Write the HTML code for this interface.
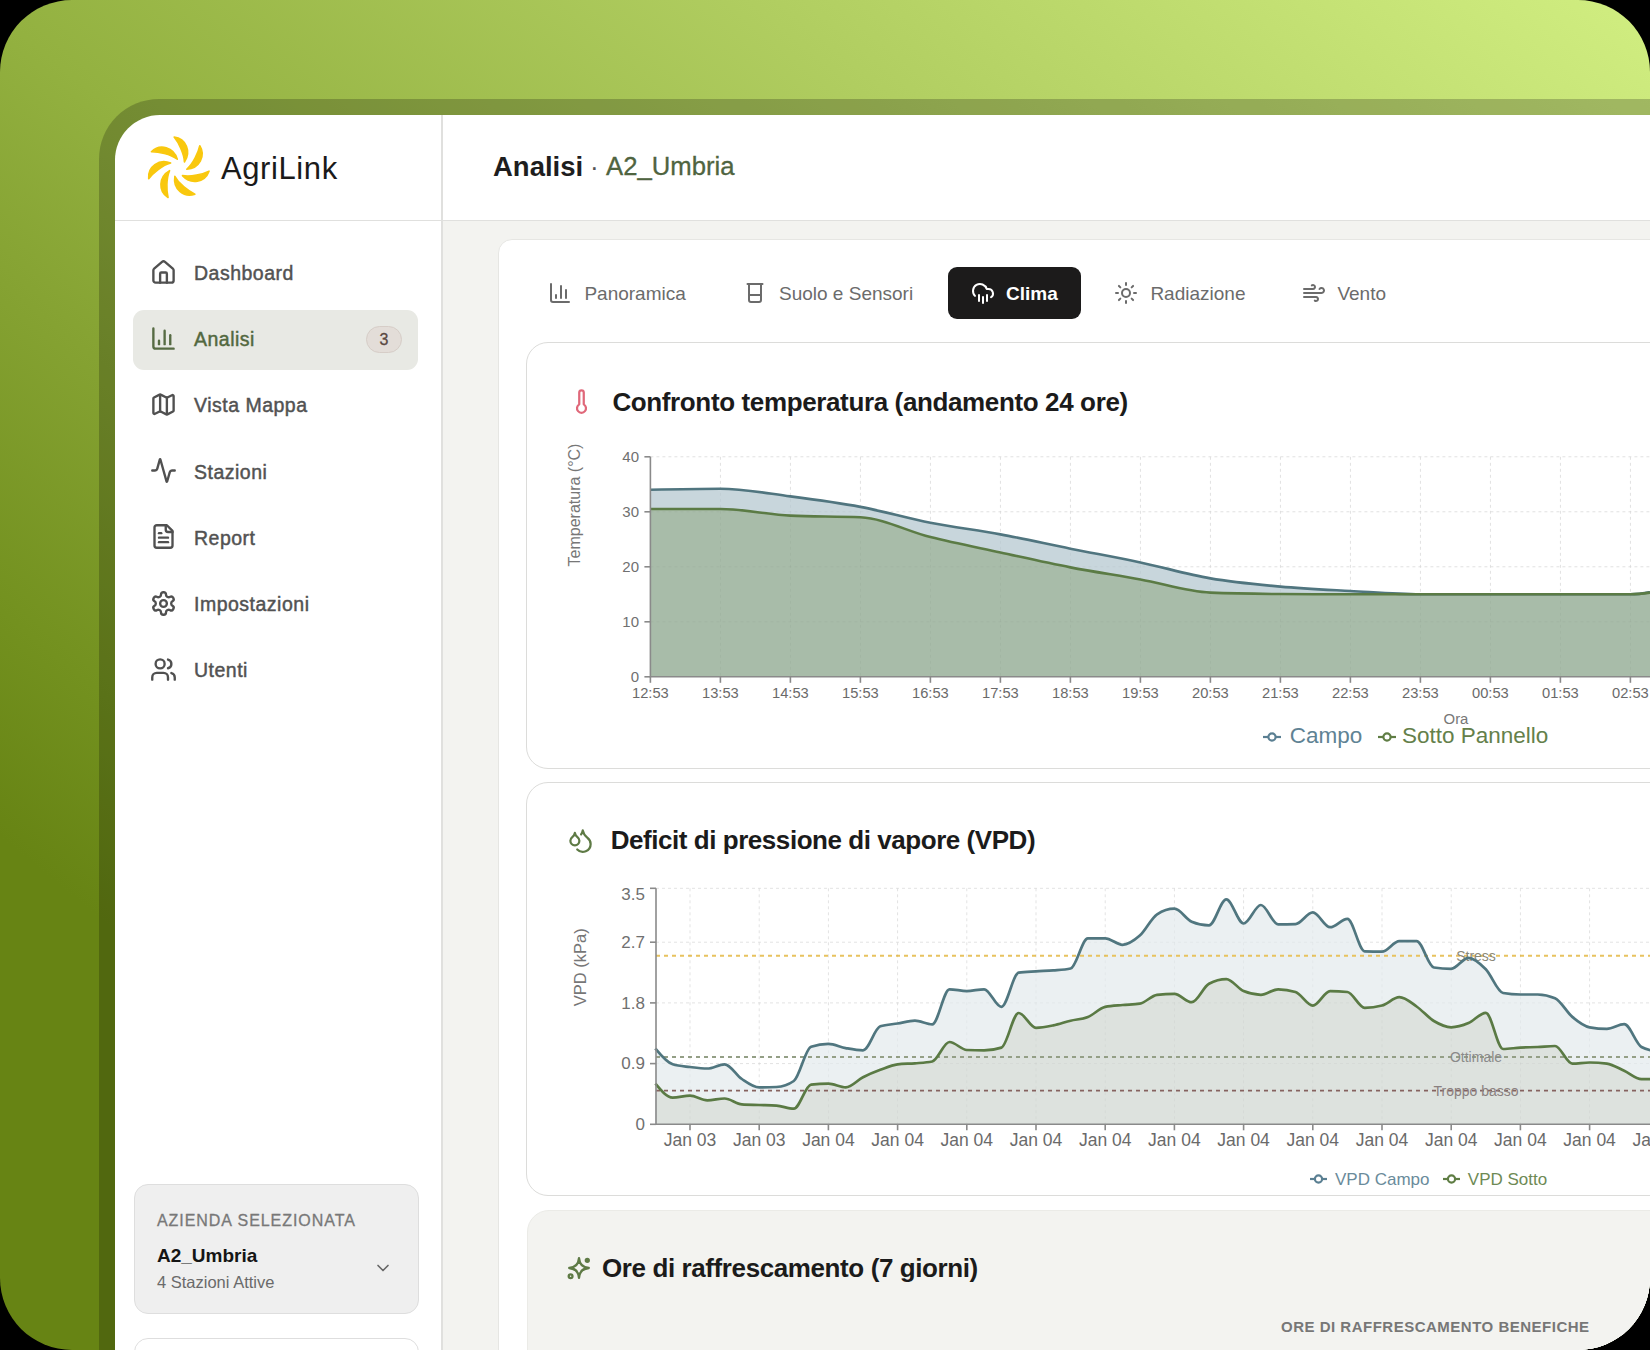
<!DOCTYPE html><html><head><meta charset="utf-8"><style>html,body{margin:0;padding:0;width:1650px;height:1350px;overflow:hidden;background:#000;}.t{position:absolute;white-space:nowrap;font-family:"Liberation Sans", sans-serif;}svg{overflow:visible}</style></head><body><div style="position:absolute;left:0;top:0;width:1650px;height:1350px;border-radius:72px;overflow:hidden;background:linear-gradient(to top right,#678414 0%,#678414 19%,#73911f 27.4%,#85a232 39.6%,#93b140 49.4%,#b0cd60 72.7%,#cbe87b 95%,#d1ee81 100%);"><div style="position:absolute;left:99px;top:99px;width:1700px;height:1400px;border-radius:60px;background:rgba(0,0,0,0.21)"></div><div style="position:absolute;left:115px;top:115px;width:1600px;height:1300px;border-top-left-radius:45px;overflow:hidden;background:#fff"><div style="position:absolute;left:-115px;top:-115px;width:1650px;height:1350px"><div style="position:absolute;left:442px;top:221px;width:1300px;height:1200px;background:#f3f3f0"></div><div style="position:absolute;left:441px;top:115px;width:1.5px;height:1300px;background:#e0e0de"></div><div style="position:absolute;left:115px;top:219.5px;width:1600px;height:1.5px;background:#e0e0de"></div><svg style="position:absolute;left:138px;top:128px" width="80" height="80" viewBox="-40 -40 80 80"><g fill="#f9c80e" stroke="#f9c80e" stroke-width="1.6" stroke-linejoin="round"><path transform="rotate(4.00 0 0)" d="M-6.00,-30.60 C6.04,-29.98 12.40,-17.21 6.00,-6.50 C5.09,-15.07 -1.21,-25.47 -6.00,-30.60Z"/><path transform="rotate(55.43 0 0)" d="M-6.00,-30.60 C6.04,-29.98 12.40,-17.21 6.00,-6.50 C5.09,-15.07 -1.21,-25.47 -6.00,-30.60Z"/><path transform="rotate(106.86 0 0)" d="M-6.00,-30.60 C6.04,-29.98 12.40,-17.21 6.00,-6.50 C5.09,-15.07 -1.21,-25.47 -6.00,-30.60Z"/><path transform="rotate(158.29 0 0)" d="M-6.00,-30.60 C6.04,-29.98 12.40,-17.21 6.00,-6.50 C5.09,-15.07 -1.21,-25.47 -6.00,-30.60Z"/><path transform="rotate(209.71 0 0)" d="M-6.00,-30.60 C6.04,-29.98 12.40,-17.21 6.00,-6.50 C5.09,-15.07 -1.21,-25.47 -6.00,-30.60Z"/><path transform="rotate(261.14 0 0)" d="M-6.00,-30.60 C6.04,-29.98 12.40,-17.21 6.00,-6.50 C5.09,-15.07 -1.21,-25.47 -6.00,-30.60Z"/><path transform="rotate(312.57 0 0)" d="M-6.00,-30.60 C6.04,-29.98 12.40,-17.21 6.00,-6.50 C5.09,-15.07 -1.21,-25.47 -6.00,-30.60Z"/></g></svg><div class="t" style="left:221.0px;top:152.9px;font-size:31px;line-height:31px;color:#1a1a1a;font-weight:400;letter-spacing:0.6px;">AgriLink</div><div class="t" style="left:493.0px;top:152.7px;font-size:27.5px;line-height:27.5px;color:#1e1e1e;font-weight:700;letter-spacing:0px;">Analisi</div><div class="t" style="left:590.0px;top:154.0px;font-size:26px;line-height:26px;color:#555;font-weight:400;letter-spacing:0px;">·</div><div class="t" style="left:606.0px;top:154.2px;font-size:25.7px;line-height:25.7px;color:#4f6440;font-weight:400;letter-spacing:0px;-webkit-text-stroke:0.3px currentColor;">A2_Umbria</div><div style="position:absolute;left:133px;top:310px;width:285px;height:60px;border-radius:11px;background:#e8e9e4"></div><div style="position:absolute;left:366px;top:326px;width:36px;height:27px;border-radius:14px;background:#e3ddd8;border:1px solid #d6cdc7;box-sizing:border-box"></div><div class="t" style="left:-616.0px;width:2000px;text-align:center;top:331.9px;font-size:16px;line-height:16px;color:#5a4842;font-weight:400;letter-spacing:0px;-webkit-text-stroke:0.3px currentColor;">3</div><svg style="position:absolute;left:150.0px;top:259.0px;" width="27" height="27" viewBox="0 0 24 24" fill="none" stroke="#505050" stroke-width="2.1" stroke-linecap="round" stroke-linejoin="round"><path d="M15 21v-8a1 1 0 0 0-1-1h-4a1 1 0 0 0-1 1v8"/><path d="M3 10a2 2 0 0 1 .709-1.528l7-5.999a2 2 0 0 1 2.582 0l7 5.999A2 2 0 0 1 21 10v9a2 2 0 0 1-2 2H5a2 2 0 0 1-2-2z"/></svg><div class="t" style="left:194.0px;top:264.2px;font-size:19.5px;line-height:19.5px;color:#525252;font-weight:400;letter-spacing:0.5px;-webkit-text-stroke:0.45px currentColor;">Dashboard</div><svg style="position:absolute;left:150.0px;top:325.1px;" width="27" height="27" viewBox="0 0 24 24" fill="none" stroke="#566b43" stroke-width="2.1" stroke-linecap="round" stroke-linejoin="round"><path d="M3 3v16a2 2 0 0 0 2 2h16"/><path d="M18 17V9"/><path d="M13 17V5"/><path d="M8 17v-3"/></svg><div class="t" style="left:194.0px;top:330.3px;font-size:19.5px;line-height:19.5px;color:#52683f;font-weight:400;letter-spacing:0.5px;-webkit-text-stroke:0.45px currentColor;">Analisi</div><svg style="position:absolute;left:150.0px;top:391.2px;" width="27" height="27" viewBox="0 0 24 24" fill="none" stroke="#505050" stroke-width="2.1" stroke-linecap="round" stroke-linejoin="round"><path d="M14.106 5.553a2 2 0 0 0 1.788 0l3.659-1.83A1 1 0 0 1 21 4.619v12.764a1 1 0 0 1-.553.894l-4.553 2.277a2 2 0 0 1-1.788 0l-4.212-2.106a2 2 0 0 0-1.788 0l-3.659 1.83A1 1 0 0 1 3 19.381V6.618a1 1 0 0 1 .553-.894l4.553-2.277a2 2 0 0 1 1.788 0z"/><path d="M15 5.764v15"/><path d="M9 3.236v15"/></svg><div class="t" style="left:194.0px;top:396.4px;font-size:19.5px;line-height:19.5px;color:#525252;font-weight:400;letter-spacing:0.5px;-webkit-text-stroke:0.45px currentColor;">Vista Mappa</div><svg style="position:absolute;left:150.0px;top:457.3px;" width="27" height="27" viewBox="0 0 24 24" fill="none" stroke="#505050" stroke-width="2.1" stroke-linecap="round" stroke-linejoin="round"><path d="M22 12h-2.48a2 2 0 0 0-1.93 1.46l-2.35 8.36a.25.25 0 0 1-.48 0L9.24 2.18a.25.25 0 0 0-.48 0l-2.35 8.36A2 2 0 0 1 4.49 12H2"/></svg><div class="t" style="left:194.0px;top:462.5px;font-size:19.5px;line-height:19.5px;color:#525252;font-weight:400;letter-spacing:0.5px;-webkit-text-stroke:0.45px currentColor;">Stazioni</div><svg style="position:absolute;left:150.0px;top:523.4px;" width="27" height="27" viewBox="0 0 24 24" fill="none" stroke="#505050" stroke-width="2.1" stroke-linecap="round" stroke-linejoin="round"><path d="M15 2H6a2 2 0 0 0-2 2v16a2 2 0 0 0 2 2h12a2 2 0 0 0 2-2V7Z"/><path d="M14 2v4a2 2 0 0 0 2 2h4"/><path d="M10 9H8"/><path d="M16 13H8"/><path d="M16 17H8"/></svg><div class="t" style="left:194.0px;top:528.6px;font-size:19.5px;line-height:19.5px;color:#525252;font-weight:400;letter-spacing:0.5px;-webkit-text-stroke:0.45px currentColor;">Report</div><svg style="position:absolute;left:150.0px;top:589.5px;" width="27" height="27" viewBox="0 0 24 24" fill="none" stroke="#505050" stroke-width="2.1" stroke-linecap="round" stroke-linejoin="round"><path d="M12.22 2h-.44a2 2 0 0 0-2 2v.18a2 2 0 0 1-1 1.73l-.43.25a2 2 0 0 1-2 0l-.15-.08a2 2 0 0 0-2.73.73l-.22.38a2 2 0 0 0 .73 2.73l.15.1a2 2 0 0 1 1 1.72v.51a2 2 0 0 1-1 1.74l-.15.09a2 2 0 0 0-.73 2.73l.22.38a2 2 0 0 0 2.73.73l.15-.08a2 2 0 0 1 2 0l.43.25a2 2 0 0 1 1 1.73V20a2 2 0 0 0 2 2h.44a2 2 0 0 0 2-2v-.18a2 2 0 0 1 1-1.73l.43-.25a2 2 0 0 1 2 0l.15.08a2 2 0 0 0 2.73-.73l.22-.39a2 2 0 0 0-.73-2.73l-.15-.08a2 2 0 0 1-1-1.74v-.5a2 2 0 0 1 1-1.74l.15-.09a2 2 0 0 0 .73-2.73l-.22-.38a2 2 0 0 0-2.73-.73l-.15.08a2 2 0 0 1-2 0l-.43-.25a2 2 0 0 1-1-1.73V4a2 2 0 0 0-2-2z"/><circle cx="12" cy="12" r="3"/></svg><div class="t" style="left:194.0px;top:594.7px;font-size:19.5px;line-height:19.5px;color:#525252;font-weight:400;letter-spacing:0.5px;-webkit-text-stroke:0.45px currentColor;">Impostazioni</div><svg style="position:absolute;left:150.0px;top:655.6px;" width="27" height="27" viewBox="0 0 24 24" fill="none" stroke="#505050" stroke-width="2.1" stroke-linecap="round" stroke-linejoin="round"><path d="M16 21v-2a4 4 0 0 0-4-4H6a4 4 0 0 0-4 4v2"/><circle cx="9" cy="7" r="4"/><path d="M22 21v-2a4 4 0 0 0-3-3.87"/><path d="M16 3.13a4 4 0 0 1 0 7.75"/></svg><div class="t" style="left:194.0px;top:660.8px;font-size:19.5px;line-height:19.5px;color:#525252;font-weight:400;letter-spacing:0.5px;-webkit-text-stroke:0.45px currentColor;">Utenti</div><div style="position:absolute;left:133.5px;top:1184px;width:285px;height:130px;border-radius:14px;background:#efefef;border:1.5px solid #dedede;box-sizing:border-box"></div><div class="t" style="left:157.0px;top:1213.3px;font-size:16px;line-height:16px;color:#787878;font-weight:400;letter-spacing:0.95px;-webkit-text-stroke:0.3px currentColor;">AZIENDA SELEZIONATA</div><div class="t" style="left:157.0px;top:1246.2px;font-size:19px;line-height:19px;color:#151515;font-weight:700;letter-spacing:0px;">A2_Umbria</div><div class="t" style="left:157.0px;top:1273.7px;font-size:16.5px;line-height:16.5px;color:#6a6a6a;font-weight:400;letter-spacing:0px;">4 Stazioni Attive</div><svg style="position:absolute;left:373.0px;top:1257.5px;" width="20" height="20" viewBox="0 0 24 24" fill="none" stroke="#666" stroke-width="2" stroke-linecap="round" stroke-linejoin="round"><path d="m6 9 6 6 6-6"/></svg><div style="position:absolute;left:133.5px;top:1337.5px;width:285px;height:130px;border-radius:14px;background:#fff;border:1.5px solid #dedede;box-sizing:border-box"></div><div style="position:absolute;left:497.5px;top:238.5px;width:1300px;height:1300px;border-radius:14px;background:#fff;border:1px solid #e6e6e3;box-sizing:border-box"></div><div style="position:absolute;left:948px;top:267px;width:132.5px;height:51.5px;border-radius:9px;background:#1c1b1b"></div><svg style="position:absolute;left:548.3px;top:281.0px;" width="24" height="24" viewBox="0 0 24 24" fill="none" stroke="#6b6b6b" stroke-width="2" stroke-linecap="round" stroke-linejoin="round"><path d="M3 3v16a2 2 0 0 0 2 2h16"/><path d="M18 17V9"/><path d="M13 17V5"/><path d="M8 17v-3"/></svg><div class="t" style="left:584.4px;top:283.7px;font-size:19px;line-height:19px;color:#6b6b6b;font-weight:400;letter-spacing:0px;">Panoramica</div><svg style="position:absolute;left:743.3px;top:281.0px;" width="24" height="24" viewBox="0 0 24 24" fill="none" stroke="#6b6b6b" stroke-width="2" stroke-linecap="round" stroke-linejoin="round"><path d="M4.5 3h15"/><path d="M6 3v16a2 2 0 0 0 2 2h8a2 2 0 0 0 2-2V3"/><path d="M6 14h12"/></svg><div class="t" style="left:779.0px;top:283.7px;font-size:19px;line-height:19px;color:#6b6b6b;font-weight:400;letter-spacing:0px;">Suolo e Sensori</div><svg style="position:absolute;left:971.2px;top:281.0px;" width="24" height="24" viewBox="0 0 24 24" fill="none" stroke="#fff" stroke-width="2" stroke-linecap="round" stroke-linejoin="round"><path d="M4 14.899A7 7 0 1 1 15.71 8h1.79a4.5 4.5 0 0 1 2.5 8.242"/><path d="M16 14v6"/><path d="M8 14v6"/><path d="M12 16v6"/></svg><div class="t" style="left:1006.0px;top:283.7px;font-size:19px;line-height:19px;color:#fff;font-weight:700;letter-spacing:0px;">Clima</div><svg style="position:absolute;left:1114.0px;top:281.0px;" width="24" height="24" viewBox="0 0 24 24" fill="none" stroke="#6b6b6b" stroke-width="2" stroke-linecap="round" stroke-linejoin="round"><circle cx="12" cy="12" r="4"/><path d="M12 2v2"/><path d="M12 20v2"/><path d="m4.93 4.93 1.41 1.41"/><path d="m17.66 17.66 1.41 1.41"/><path d="M2 12h2"/><path d="M20 12h2"/><path d="m6.34 17.66-1.41 1.41"/><path d="m19.07 4.93-1.41 1.41"/></svg><div class="t" style="left:1150.4px;top:283.7px;font-size:19px;line-height:19px;color:#6b6b6b;font-weight:400;letter-spacing:0px;">Radiazione</div><svg style="position:absolute;left:1301.5px;top:281.0px;" width="24" height="24" viewBox="0 0 24 24" fill="none" stroke="#6b6b6b" stroke-width="2" stroke-linecap="round" stroke-linejoin="round"><path d="M12.8 19.6A2 2 0 1 0 14 16H2"/><path d="M17.5 8a2.5 2.5 0 1 1 2 4H2"/><path d="M9.8 4.4A2 2 0 1 1 11 8H2"/></svg><div class="t" style="left:1337.4px;top:283.7px;font-size:19px;line-height:19px;color:#6b6b6b;font-weight:400;letter-spacing:0px;">Vento</div><div style="position:absolute;left:526px;top:341.5px;width:1300px;height:427px;border-radius:22px;background:#fff;border:1.5px solid #dcdcda;box-sizing:border-box"></div><div style="position:absolute;left:526px;top:782px;width:1300px;height:414px;border-radius:22px;background:#fff;border:1.5px solid #dcdcda;box-sizing:border-box"></div><div style="position:absolute;left:526.5px;top:1210px;width:1300px;height:400px;border-radius:22px;background:#f3f3f0;border:1px solid #ebebe7;box-sizing:border-box"></div><svg style="position:absolute;left:568.0px;top:388.3px;" width="27" height="27" viewBox="0 0 24 24" fill="none" stroke="#e0687a" stroke-width="2" stroke-linecap="round" stroke-linejoin="round"><path d="M14 4v10.54a4 4 0 1 1-4 0V4a2 2 0 0 1 4 0Z"/></svg><div class="t" style="left:612.4px;top:388.6px;font-size:26px;line-height:26px;color:#1b1b1b;font-weight:700;letter-spacing:-0.37px;">Confronto temperatura (andamento 24 ore)</div><svg style="position:absolute;left:566.7px;top:826.7px;" width="27" height="27" viewBox="0 0 24 24" fill="none" stroke="#5e7a45" stroke-width="2" stroke-linecap="round" stroke-linejoin="round"><path d="M7 16.3c2.2 0 4-1.83 4-4.05 0-1.16-.57-2.26-1.71-3.19S7.29 6.75 7 5.3c-.29 1.45-1.14 2.84-2.29 3.76S3 11.1 3 12.25c0 2.22 1.8 4.05 4 4.05z"/><path d="M12.56 6.6A10.97 10.97 0 0 0 14 3.02c.5 2.5 2 4.9 4 6.5s3 3.5 3 5.5a6.98 6.98 0 0 1-11.91 4.97"/></svg><div class="t" style="left:610.7px;top:826.6px;font-size:26px;line-height:26px;color:#1b1b1b;font-weight:700;letter-spacing:-0.45px;">Deficit di pressione di vapore (VPD)</div><svg style="position:absolute;left:566.5px;top:1256.0px;color:#5e7a45;" width="24" height="24" viewBox="0 0 24 24" fill="none" stroke="#5e7a45" stroke-width="2.3" stroke-linecap="round" stroke-linejoin="round"><path d="M12 2.2 Q12.7 11.3 21.8 12 Q12.7 12.7 12 21.8 Q11.3 12.7 2.2 12 Q11.3 11.3 12 2.2Z"/><circle cx="3.6" cy="20.2" r="1.9"/><circle cx="20.3" cy="4.3" r="1.5" fill="currentColor"/></svg><div class="t" style="left:602.0px;top:1255.0px;font-size:26px;line-height:26px;color:#1b1b1b;font-weight:700;letter-spacing:-0.4px;">Ore di raffrescamento (7 giorni)</div><div class="t" style="left:1281.0px;top:1319.2px;font-size:15px;line-height:15px;color:#777;font-weight:700;letter-spacing:0.5px;">ORE DI RAFFRESCAMENTO BENEFICHE</div><svg style="position:absolute;left:0;top:0" width="1650" height="1350"><g stroke="#e9e9e9" stroke-width="1" stroke-dasharray="3 3"><line x1="650.4" y1="621.8" x2="1650" y2="621.8"/><line x1="650.4" y1="566.8" x2="1650" y2="566.8"/><line x1="650.4" y1="511.8" x2="1650" y2="511.8"/><line x1="650.4" y1="456.8" x2="1650" y2="456.8"/><line x1="720.4" y1="456.8" x2="720.4" y2="676.8"/><line x1="790.4" y1="456.8" x2="790.4" y2="676.8"/><line x1="860.4" y1="456.8" x2="860.4" y2="676.8"/><line x1="930.4" y1="456.8" x2="930.4" y2="676.8"/><line x1="1000.4" y1="456.8" x2="1000.4" y2="676.8"/><line x1="1070.4" y1="456.8" x2="1070.4" y2="676.8"/><line x1="1140.4" y1="456.8" x2="1140.4" y2="676.8"/><line x1="1210.4" y1="456.8" x2="1210.4" y2="676.8"/><line x1="1280.4" y1="456.8" x2="1280.4" y2="676.8"/><line x1="1350.4" y1="456.8" x2="1350.4" y2="676.8"/><line x1="1420.4" y1="456.8" x2="1420.4" y2="676.8"/><line x1="1490.4" y1="456.8" x2="1490.4" y2="676.8"/><line x1="1560.4" y1="456.8" x2="1560.4" y2="676.8"/><line x1="1630.4" y1="456.8" x2="1630.4" y2="676.8"/><line x1="1700.4" y1="456.8" x2="1700.4" y2="676.8"/></g><path d="M650.40,489.80C673.73,489.25 697.07,488.70 720.40,488.70C743.73,488.70 767.07,493.38 790.40,496.40C813.73,499.42 837.07,502.45 860.40,506.85C883.73,511.25 907.07,518.22 930.40,522.80C953.73,527.38 977.07,530.04 1000.40,534.35C1023.73,538.66 1047.07,543.97 1070.40,548.65C1093.73,553.32 1117.07,557.45 1140.40,562.40C1163.73,567.35 1187.07,574.32 1210.40,578.35C1233.73,582.38 1257.07,584.49 1280.40,586.60C1303.73,588.71 1327.07,589.72 1350.40,591.00C1373.73,592.28 1397.07,594.30 1420.40,594.30C1443.73,594.30 1467.07,594.30 1490.40,594.30C1513.73,594.30 1537.07,594.30 1560.40,594.30C1583.73,594.30 1607.07,594.30 1630.40,594.30C1653.73,594.30 1677.07,584.22 1700.40,580.55C1723.73,576.88 1747.07,574.59 1770.40,572.30L1770.40,676.80L650.40,676.80Z" fill="#c8d6dc"/><path d="M650.40,509.05C673.73,509.05 697.07,509.05 720.40,509.05C743.73,509.05 767.07,514.55 790.40,515.65C813.73,516.75 837.07,516.20 860.40,517.30C883.73,518.40 907.07,531.23 930.40,537.10C953.73,542.97 977.07,547.46 1000.40,552.50C1023.73,557.54 1047.07,562.86 1070.40,567.35C1093.73,571.84 1117.07,575.23 1140.40,579.45C1163.73,583.67 1187.07,591.73 1210.40,592.65C1233.73,593.57 1257.07,593.84 1280.40,594.02C1303.73,594.21 1327.07,594.30 1350.40,594.30C1373.73,594.30 1397.07,594.30 1420.40,594.30C1443.73,594.30 1467.07,594.30 1490.40,594.30C1513.73,594.30 1537.07,594.30 1560.40,594.30C1583.73,594.30 1607.07,594.30 1630.40,594.30C1653.73,594.30 1677.07,586.97 1700.40,583.30C1723.73,579.63 1747.07,575.97 1770.40,572.30L1770.40,676.80L650.40,676.80Z" fill="#a8bca9"/><g stroke="#000" stroke-opacity="0.035" stroke-width="1" stroke-dasharray="3 3"><line x1="650.4" y1="621.8" x2="1650" y2="621.8"/><line x1="650.4" y1="566.8" x2="1650" y2="566.8"/><line x1="650.4" y1="511.8" x2="1650" y2="511.8"/><line x1="650.4" y1="456.8" x2="1650" y2="456.8"/><line x1="720.4" y1="456.8" x2="720.4" y2="676.8"/><line x1="790.4" y1="456.8" x2="790.4" y2="676.8"/><line x1="860.4" y1="456.8" x2="860.4" y2="676.8"/><line x1="930.4" y1="456.8" x2="930.4" y2="676.8"/><line x1="1000.4" y1="456.8" x2="1000.4" y2="676.8"/><line x1="1070.4" y1="456.8" x2="1070.4" y2="676.8"/><line x1="1140.4" y1="456.8" x2="1140.4" y2="676.8"/><line x1="1210.4" y1="456.8" x2="1210.4" y2="676.8"/><line x1="1280.4" y1="456.8" x2="1280.4" y2="676.8"/><line x1="1350.4" y1="456.8" x2="1350.4" y2="676.8"/><line x1="1420.4" y1="456.8" x2="1420.4" y2="676.8"/><line x1="1490.4" y1="456.8" x2="1490.4" y2="676.8"/><line x1="1560.4" y1="456.8" x2="1560.4" y2="676.8"/><line x1="1630.4" y1="456.8" x2="1630.4" y2="676.8"/><line x1="1700.4" y1="456.8" x2="1700.4" y2="676.8"/></g><path d="M650.40,489.80C673.73,489.25 697.07,488.70 720.40,488.70C743.73,488.70 767.07,493.38 790.40,496.40C813.73,499.42 837.07,502.45 860.40,506.85C883.73,511.25 907.07,518.22 930.40,522.80C953.73,527.38 977.07,530.04 1000.40,534.35C1023.73,538.66 1047.07,543.97 1070.40,548.65C1093.73,553.32 1117.07,557.45 1140.40,562.40C1163.73,567.35 1187.07,574.32 1210.40,578.35C1233.73,582.38 1257.07,584.49 1280.40,586.60C1303.73,588.71 1327.07,589.72 1350.40,591.00C1373.73,592.28 1397.07,594.30 1420.40,594.30C1443.73,594.30 1467.07,594.30 1490.40,594.30C1513.73,594.30 1537.07,594.30 1560.40,594.30C1583.73,594.30 1607.07,594.30 1630.40,594.30C1653.73,594.30 1677.07,584.22 1700.40,580.55C1723.73,576.88 1747.07,574.59 1770.40,572.30" fill="none" stroke="#50757f" stroke-width="2.6"/><path d="M650.40,509.05C673.73,509.05 697.07,509.05 720.40,509.05C743.73,509.05 767.07,514.55 790.40,515.65C813.73,516.75 837.07,516.20 860.40,517.30C883.73,518.40 907.07,531.23 930.40,537.10C953.73,542.97 977.07,547.46 1000.40,552.50C1023.73,557.54 1047.07,562.86 1070.40,567.35C1093.73,571.84 1117.07,575.23 1140.40,579.45C1163.73,583.67 1187.07,591.73 1210.40,592.65C1233.73,593.57 1257.07,593.84 1280.40,594.02C1303.73,594.21 1327.07,594.30 1350.40,594.30C1373.73,594.30 1397.07,594.30 1420.40,594.30C1443.73,594.30 1467.07,594.30 1490.40,594.30C1513.73,594.30 1537.07,594.30 1560.40,594.30C1583.73,594.30 1607.07,594.30 1630.40,594.30C1653.73,594.30 1677.07,586.97 1700.40,583.30C1723.73,579.63 1747.07,575.97 1770.40,572.30" fill="none" stroke="#5b7b45" stroke-width="2.6"/><g stroke="#8a8a8a" stroke-width="1.6" fill="none"><path d="M650.4,456.8V676.8H1650"/><path d="M644.4,676.8H650.4"/><path d="M644.4,621.8H650.4"/><path d="M644.4,566.8H650.4"/><path d="M644.4,511.8H650.4"/><path d="M644.4,456.8H650.4"/><path d="M650.4,676.8V682.8"/><path d="M720.4,676.8V682.8"/><path d="M790.4,676.8V682.8"/><path d="M860.4,676.8V682.8"/><path d="M930.4,676.8V682.8"/><path d="M1000.4,676.8V682.8"/><path d="M1070.4,676.8V682.8"/><path d="M1140.4,676.8V682.8"/><path d="M1210.4,676.8V682.8"/><path d="M1280.4,676.8V682.8"/><path d="M1350.4,676.8V682.8"/><path d="M1420.4,676.8V682.8"/><path d="M1490.4,676.8V682.8"/><path d="M1560.4,676.8V682.8"/><path d="M1630.4,676.8V682.8"/><path d="M1700.4,676.8V682.8"/></g></svg><div class="t" style="right:1011.0px;top:669.4px;font-size:15px;line-height:15px;color:#707070;font-weight:400;letter-spacing:0px;">0</div><div class="t" style="right:1011.0px;top:614.4px;font-size:15px;line-height:15px;color:#707070;font-weight:400;letter-spacing:0px;">10</div><div class="t" style="right:1011.0px;top:559.4px;font-size:15px;line-height:15px;color:#707070;font-weight:400;letter-spacing:0px;">20</div><div class="t" style="right:1011.0px;top:504.4px;font-size:15px;line-height:15px;color:#707070;font-weight:400;letter-spacing:0px;">30</div><div class="t" style="right:1011.0px;top:449.4px;font-size:15px;line-height:15px;color:#707070;font-weight:400;letter-spacing:0px;">40</div><div class="t" style="left:-349.6px;width:2000px;text-align:center;top:686.1px;font-size:14.7px;line-height:14.7px;color:#6a6a6a;font-weight:400;letter-spacing:0px;">12:53</div><div class="t" style="left:-279.6px;width:2000px;text-align:center;top:686.1px;font-size:14.7px;line-height:14.7px;color:#6a6a6a;font-weight:400;letter-spacing:0px;">13:53</div><div class="t" style="left:-209.6px;width:2000px;text-align:center;top:686.1px;font-size:14.7px;line-height:14.7px;color:#6a6a6a;font-weight:400;letter-spacing:0px;">14:53</div><div class="t" style="left:-139.6px;width:2000px;text-align:center;top:686.1px;font-size:14.7px;line-height:14.7px;color:#6a6a6a;font-weight:400;letter-spacing:0px;">15:53</div><div class="t" style="left:-69.6px;width:2000px;text-align:center;top:686.1px;font-size:14.7px;line-height:14.7px;color:#6a6a6a;font-weight:400;letter-spacing:0px;">16:53</div><div class="t" style="left:0.4px;width:2000px;text-align:center;top:686.1px;font-size:14.7px;line-height:14.7px;color:#6a6a6a;font-weight:400;letter-spacing:0px;">17:53</div><div class="t" style="left:70.4px;width:2000px;text-align:center;top:686.1px;font-size:14.7px;line-height:14.7px;color:#6a6a6a;font-weight:400;letter-spacing:0px;">18:53</div><div class="t" style="left:140.4px;width:2000px;text-align:center;top:686.1px;font-size:14.7px;line-height:14.7px;color:#6a6a6a;font-weight:400;letter-spacing:0px;">19:53</div><div class="t" style="left:210.4px;width:2000px;text-align:center;top:686.1px;font-size:14.7px;line-height:14.7px;color:#6a6a6a;font-weight:400;letter-spacing:0px;">20:53</div><div class="t" style="left:280.4px;width:2000px;text-align:center;top:686.1px;font-size:14.7px;line-height:14.7px;color:#6a6a6a;font-weight:400;letter-spacing:0px;">21:53</div><div class="t" style="left:350.4px;width:2000px;text-align:center;top:686.1px;font-size:14.7px;line-height:14.7px;color:#6a6a6a;font-weight:400;letter-spacing:0px;">22:53</div><div class="t" style="left:420.4px;width:2000px;text-align:center;top:686.1px;font-size:14.7px;line-height:14.7px;color:#6a6a6a;font-weight:400;letter-spacing:0px;">23:53</div><div class="t" style="left:490.4px;width:2000px;text-align:center;top:686.1px;font-size:14.7px;line-height:14.7px;color:#6a6a6a;font-weight:400;letter-spacing:0px;">00:53</div><div class="t" style="left:560.4px;width:2000px;text-align:center;top:686.1px;font-size:14.7px;line-height:14.7px;color:#6a6a6a;font-weight:400;letter-spacing:0px;">01:53</div><div class="t" style="left:630.4px;width:2000px;text-align:center;top:686.1px;font-size:14.7px;line-height:14.7px;color:#6a6a6a;font-weight:400;letter-spacing:0px;">02:53</div><div class="t" style="left:700.4px;width:2000px;text-align:center;top:686.1px;font-size:14.7px;line-height:14.7px;color:#6a6a6a;font-weight:400;letter-spacing:0px;">03:53</div><div class="t" style="left:-424.7px;width:2000px;text-align:center;top:496.9px;font-size:16px;line-height:16px;color:#777;font-weight:400;letter-spacing:0px;transform:rotate(-90deg);">Temperatura (°C)</div><div class="t" style="left:456.0px;width:2000px;text-align:center;top:711.6px;font-size:14.9px;line-height:14.9px;color:#777;font-weight:400;letter-spacing:0px;">Ora</div><svg style="position:absolute;left:1262.3px;top:730.8px" width="20" height="12" viewBox="0 0 20 12"><path d="M1,6H19" stroke="#5a7f92" stroke-width="2.2"/><circle cx="10.0" cy="6" r="3.6" fill="#fff" stroke="#5a7f92" stroke-width="2.2"/></svg><div class="t" style="left:1289.8px;top:724.5px;font-size:22.5px;line-height:22.5px;color:#5f8394;font-weight:400;letter-spacing:0px;">Campo</div><svg style="position:absolute;left:1376.7px;top:730.8px" width="20" height="12" viewBox="0 0 20 12"><path d="M1,6H19" stroke="#5f7d44" stroke-width="2.2"/><circle cx="10.0" cy="6" r="3.6" fill="#fff" stroke="#5f7d44" stroke-width="2.2"/></svg><div class="t" style="left:1402.0px;top:724.5px;font-size:22.5px;line-height:22.5px;color:#64804a;font-weight:400;letter-spacing:0px;">Sotto Pannello</div><svg style="position:absolute;left:0;top:0" width="1650" height="1350"><g stroke="#ebebeb" stroke-width="1" stroke-dasharray="3 3"><line x1="656" y1="1063.6" x2="1650" y2="1063.6"/><line x1="656" y1="1002.9" x2="1650" y2="1002.9"/><line x1="656" y1="942.2" x2="1650" y2="942.2"/><line x1="656" y1="888.3" x2="1650" y2="888.3"/><line x1="690.0" y1="888.3" x2="690.0" y2="1124.3"/><line x1="759.2" y1="888.3" x2="759.2" y2="1124.3"/><line x1="828.4" y1="888.3" x2="828.4" y2="1124.3"/><line x1="897.6" y1="888.3" x2="897.6" y2="1124.3"/><line x1="966.8" y1="888.3" x2="966.8" y2="1124.3"/><line x1="1036.0" y1="888.3" x2="1036.0" y2="1124.3"/><line x1="1105.2" y1="888.3" x2="1105.2" y2="1124.3"/><line x1="1174.4" y1="888.3" x2="1174.4" y2="1124.3"/><line x1="1243.6" y1="888.3" x2="1243.6" y2="1124.3"/><line x1="1312.8" y1="888.3" x2="1312.8" y2="1124.3"/><line x1="1382.0" y1="888.3" x2="1382.0" y2="1124.3"/><line x1="1451.2" y1="888.3" x2="1451.2" y2="1124.3"/><line x1="1520.4" y1="888.3" x2="1520.4" y2="1124.3"/><line x1="1589.6" y1="888.3" x2="1589.6" y2="1124.3"/><line x1="1658.8" y1="888.3" x2="1658.8" y2="1124.3"/></g><path d="M655.40,1048.50C661.17,1055.50 666.93,1062.50 672.70,1064.30C678.47,1066.10 684.23,1066.30 690.00,1067.00C695.77,1067.70 701.53,1068.50 707.30,1068.50C713.07,1068.50 718.83,1064.30 724.60,1064.30C730.37,1064.30 736.13,1075.15 741.90,1079.00C747.67,1082.85 753.43,1087.40 759.20,1087.40C764.97,1087.40 770.73,1087.27 776.50,1087.00C782.27,1086.73 788.03,1085.00 793.80,1081.00C799.57,1077.00 805.33,1048.57 811.10,1046.70C816.87,1044.83 822.63,1043.90 828.40,1043.90C834.17,1043.90 839.93,1047.02 845.70,1048.10C851.47,1049.18 857.23,1050.40 863.00,1050.40C868.77,1050.40 874.53,1028.17 880.30,1026.30C886.07,1024.43 891.83,1024.43 897.60,1023.50C903.37,1022.57 909.13,1020.70 914.90,1020.70C920.67,1020.70 926.43,1024.40 932.20,1024.40C937.97,1024.40 943.73,989.30 949.50,989.30C955.27,989.30 961.03,991.10 966.80,991.10C972.57,991.10 978.33,989.30 984.10,989.30C989.87,989.30 995.63,1006.90 1001.40,1006.90C1007.17,1006.90 1012.93,973.47 1018.70,972.60C1024.47,971.73 1030.23,971.67 1036.00,971.30C1041.77,970.93 1047.53,970.87 1053.30,970.40C1059.07,969.93 1064.83,969.77 1070.60,968.50C1076.37,967.23 1082.13,938.30 1087.90,938.30C1093.67,938.30 1099.43,938.30 1105.20,938.30C1110.97,938.30 1116.73,944.80 1122.50,944.80C1128.27,944.80 1134.03,940.68 1139.80,935.60C1145.57,930.52 1151.33,918.03 1157.10,914.30C1162.87,910.57 1168.63,908.70 1174.40,908.70C1180.17,908.70 1185.93,919.23 1191.70,921.70C1197.47,924.17 1203.23,925.40 1209.00,925.40C1214.77,925.40 1220.53,899.40 1226.30,899.40C1232.07,899.40 1237.83,923.50 1243.60,923.50C1249.37,923.50 1255.13,905.00 1260.90,905.00C1266.67,905.00 1272.43,924.40 1278.20,924.40C1283.97,924.40 1289.73,924.30 1295.50,924.10C1301.27,923.90 1307.03,912.40 1312.80,912.40C1318.57,912.40 1324.33,927.20 1330.10,927.20C1335.87,927.20 1341.63,918.90 1347.40,918.90C1353.17,918.90 1358.93,951.10 1364.70,951.30C1370.47,951.50 1376.23,951.60 1382.00,951.60C1387.77,951.60 1393.53,941.20 1399.30,941.20C1405.07,941.20 1410.83,941.20 1416.60,941.20C1422.37,941.20 1428.13,966.63 1433.90,967.50C1439.67,968.37 1445.43,968.80 1451.20,968.80C1456.97,968.80 1462.73,957.80 1468.50,957.80C1474.27,957.80 1480.03,963.33 1485.80,969.20C1491.57,975.07 1497.33,992.00 1503.10,993.00C1508.87,994.00 1514.63,994.50 1520.40,994.50C1526.17,994.50 1531.93,994.50 1537.70,994.50C1543.47,994.50 1549.23,995.73 1555.00,998.20C1560.77,1000.67 1566.53,1012.05 1572.30,1016.90C1578.07,1021.75 1583.83,1026.23 1589.60,1027.30C1595.37,1028.37 1601.13,1028.90 1606.90,1028.90C1612.67,1028.90 1618.43,1024.20 1624.20,1024.20C1629.97,1024.20 1635.73,1043.67 1641.50,1047.00C1647.27,1050.33 1653.03,1050.67 1658.80,1052.00C1664.57,1053.33 1670.33,1054.17 1676.10,1055.00L1676.10,1124.30L655.40,1124.30Z" fill="#ebf0f2"/><path d="M655.40,1083.70C661.17,1090.65 666.93,1097.60 672.70,1097.60C678.47,1097.60 684.23,1095.70 690.00,1095.70C695.77,1095.70 701.53,1100.40 707.30,1100.40C713.07,1100.40 718.83,1098.50 724.60,1098.50C730.37,1098.50 736.13,1104.00 741.90,1104.40C747.67,1104.80 753.43,1104.80 759.20,1105.00C764.97,1105.20 770.73,1105.20 776.50,1105.60C782.27,1106.00 788.03,1108.70 793.80,1108.70C799.57,1108.70 805.33,1085.20 811.10,1084.60C816.87,1084.00 822.63,1083.70 828.40,1083.70C834.17,1083.70 839.93,1087.40 845.70,1087.40C851.47,1087.40 857.23,1080.13 863.00,1077.20C868.77,1074.27 874.53,1071.95 880.30,1069.80C886.07,1067.65 891.83,1064.97 897.60,1064.30C903.37,1063.63 909.13,1063.77 914.90,1063.30C920.67,1062.83 926.43,1062.70 932.20,1061.50C937.97,1060.30 943.73,1042.00 949.50,1042.00C955.27,1042.00 961.03,1049.73 966.80,1050.00C972.57,1050.27 978.33,1050.40 984.10,1050.40C989.87,1050.40 995.63,1049.47 1001.40,1047.60C1007.17,1045.73 1012.93,1013.00 1018.70,1013.00C1024.47,1013.00 1030.23,1027.80 1036.00,1027.80C1041.77,1027.80 1047.53,1026.58 1053.30,1025.40C1059.07,1024.22 1064.83,1022.10 1070.60,1020.70C1076.37,1019.30 1082.13,1019.30 1087.90,1017.00C1093.67,1014.70 1099.43,1008.17 1105.20,1006.90C1110.97,1005.63 1116.73,1005.53 1122.50,1005.00C1128.27,1004.47 1134.03,1004.57 1139.80,1003.70C1145.57,1002.83 1151.33,995.40 1157.10,994.80C1162.87,994.20 1168.63,993.90 1174.40,993.90C1180.17,993.90 1185.93,1002.20 1191.70,1002.20C1197.47,1002.20 1203.23,986.77 1209.00,983.70C1214.77,980.63 1220.53,979.10 1226.30,979.10C1232.07,979.10 1237.83,988.63 1243.60,991.10C1249.37,993.57 1255.13,994.80 1260.90,994.80C1266.67,994.80 1272.43,989.30 1278.20,989.30C1283.97,989.30 1289.73,990.20 1295.50,992.00C1301.27,993.80 1307.03,1005.60 1312.80,1005.60C1318.57,1005.60 1324.33,991.10 1330.10,991.10C1335.87,991.10 1341.63,991.40 1347.40,992.00C1353.17,992.60 1358.93,1007.80 1364.70,1007.80C1370.47,1007.80 1376.23,1007.03 1382.00,1005.50C1387.77,1003.97 1393.53,997.20 1399.30,997.20C1405.07,997.20 1410.83,1002.53 1416.60,1006.50C1422.37,1010.47 1428.13,1017.53 1433.90,1021.00C1439.67,1024.47 1445.43,1027.30 1451.20,1027.30C1456.97,1027.30 1462.73,1025.52 1468.50,1023.10C1474.27,1020.68 1480.03,1012.80 1485.80,1012.80C1491.57,1012.80 1497.33,1049.00 1503.10,1049.00C1508.87,1049.00 1514.63,1047.93 1520.40,1047.60C1526.17,1047.27 1531.93,1047.27 1537.70,1047.00C1543.47,1046.73 1549.23,1046.00 1555.00,1046.00C1560.77,1046.00 1566.53,1063.60 1572.30,1063.60C1578.07,1063.60 1583.83,1062.50 1589.60,1062.50C1595.37,1062.50 1601.13,1062.87 1606.90,1063.60C1612.67,1064.33 1618.43,1068.22 1624.20,1070.80C1629.97,1073.38 1635.73,1079.10 1641.50,1079.10C1647.27,1079.10 1653.03,1079.10 1658.80,1079.10C1664.57,1079.10 1670.33,1079.05 1676.10,1079.00L1676.10,1124.30L655.40,1124.30Z" fill="#dde2de"/><path d="M656,955.7H1650" stroke="#e8c25e" stroke-width="2" stroke-dasharray="4 4"/><path d="M656,1056.9H1650" stroke="#949f86" stroke-width="2" stroke-dasharray="4 4"/><path d="M656,1090.6H1650" stroke="#86625f" stroke-width="1.6" stroke-dasharray="4 4"/><g stroke="#000" stroke-opacity="0.035" stroke-width="1" stroke-dasharray="3 3"><line x1="656" y1="1063.6" x2="1650" y2="1063.6"/><line x1="656" y1="1002.9" x2="1650" y2="1002.9"/><line x1="656" y1="942.2" x2="1650" y2="942.2"/><line x1="656" y1="888.3" x2="1650" y2="888.3"/><line x1="690.0" y1="888.3" x2="690.0" y2="1124.3"/><line x1="759.2" y1="888.3" x2="759.2" y2="1124.3"/><line x1="828.4" y1="888.3" x2="828.4" y2="1124.3"/><line x1="897.6" y1="888.3" x2="897.6" y2="1124.3"/><line x1="966.8" y1="888.3" x2="966.8" y2="1124.3"/><line x1="1036.0" y1="888.3" x2="1036.0" y2="1124.3"/><line x1="1105.2" y1="888.3" x2="1105.2" y2="1124.3"/><line x1="1174.4" y1="888.3" x2="1174.4" y2="1124.3"/><line x1="1243.6" y1="888.3" x2="1243.6" y2="1124.3"/><line x1="1312.8" y1="888.3" x2="1312.8" y2="1124.3"/><line x1="1382.0" y1="888.3" x2="1382.0" y2="1124.3"/><line x1="1451.2" y1="888.3" x2="1451.2" y2="1124.3"/><line x1="1520.4" y1="888.3" x2="1520.4" y2="1124.3"/><line x1="1589.6" y1="888.3" x2="1589.6" y2="1124.3"/><line x1="1658.8" y1="888.3" x2="1658.8" y2="1124.3"/></g><g font-family="Liberation Sans, sans-serif" font-size="14" text-anchor="middle"><text x="1476" y="960.7" fill="#8a8878">Stress</text><text x="1476" y="1061.9" fill="#8a8a8a">Ottimale</text><text x="1476" y="1095.6" fill="#8a8080">Troppo basso</text></g><path d="M655.40,1048.50C661.17,1055.50 666.93,1062.50 672.70,1064.30C678.47,1066.10 684.23,1066.30 690.00,1067.00C695.77,1067.70 701.53,1068.50 707.30,1068.50C713.07,1068.50 718.83,1064.30 724.60,1064.30C730.37,1064.30 736.13,1075.15 741.90,1079.00C747.67,1082.85 753.43,1087.40 759.20,1087.40C764.97,1087.40 770.73,1087.27 776.50,1087.00C782.27,1086.73 788.03,1085.00 793.80,1081.00C799.57,1077.00 805.33,1048.57 811.10,1046.70C816.87,1044.83 822.63,1043.90 828.40,1043.90C834.17,1043.90 839.93,1047.02 845.70,1048.10C851.47,1049.18 857.23,1050.40 863.00,1050.40C868.77,1050.40 874.53,1028.17 880.30,1026.30C886.07,1024.43 891.83,1024.43 897.60,1023.50C903.37,1022.57 909.13,1020.70 914.90,1020.70C920.67,1020.70 926.43,1024.40 932.20,1024.40C937.97,1024.40 943.73,989.30 949.50,989.30C955.27,989.30 961.03,991.10 966.80,991.10C972.57,991.10 978.33,989.30 984.10,989.30C989.87,989.30 995.63,1006.90 1001.40,1006.90C1007.17,1006.90 1012.93,973.47 1018.70,972.60C1024.47,971.73 1030.23,971.67 1036.00,971.30C1041.77,970.93 1047.53,970.87 1053.30,970.40C1059.07,969.93 1064.83,969.77 1070.60,968.50C1076.37,967.23 1082.13,938.30 1087.90,938.30C1093.67,938.30 1099.43,938.30 1105.20,938.30C1110.97,938.30 1116.73,944.80 1122.50,944.80C1128.27,944.80 1134.03,940.68 1139.80,935.60C1145.57,930.52 1151.33,918.03 1157.10,914.30C1162.87,910.57 1168.63,908.70 1174.40,908.70C1180.17,908.70 1185.93,919.23 1191.70,921.70C1197.47,924.17 1203.23,925.40 1209.00,925.40C1214.77,925.40 1220.53,899.40 1226.30,899.40C1232.07,899.40 1237.83,923.50 1243.60,923.50C1249.37,923.50 1255.13,905.00 1260.90,905.00C1266.67,905.00 1272.43,924.40 1278.20,924.40C1283.97,924.40 1289.73,924.30 1295.50,924.10C1301.27,923.90 1307.03,912.40 1312.80,912.40C1318.57,912.40 1324.33,927.20 1330.10,927.20C1335.87,927.20 1341.63,918.90 1347.40,918.90C1353.17,918.90 1358.93,951.10 1364.70,951.30C1370.47,951.50 1376.23,951.60 1382.00,951.60C1387.77,951.60 1393.53,941.20 1399.30,941.20C1405.07,941.20 1410.83,941.20 1416.60,941.20C1422.37,941.20 1428.13,966.63 1433.90,967.50C1439.67,968.37 1445.43,968.80 1451.20,968.80C1456.97,968.80 1462.73,957.80 1468.50,957.80C1474.27,957.80 1480.03,963.33 1485.80,969.20C1491.57,975.07 1497.33,992.00 1503.10,993.00C1508.87,994.00 1514.63,994.50 1520.40,994.50C1526.17,994.50 1531.93,994.50 1537.70,994.50C1543.47,994.50 1549.23,995.73 1555.00,998.20C1560.77,1000.67 1566.53,1012.05 1572.30,1016.90C1578.07,1021.75 1583.83,1026.23 1589.60,1027.30C1595.37,1028.37 1601.13,1028.90 1606.90,1028.90C1612.67,1028.90 1618.43,1024.20 1624.20,1024.20C1629.97,1024.20 1635.73,1043.67 1641.50,1047.00C1647.27,1050.33 1653.03,1050.67 1658.80,1052.00C1664.57,1053.33 1670.33,1054.17 1676.10,1055.00" fill="none" stroke="#50767f" stroke-width="2.7"/><path d="M655.40,1083.70C661.17,1090.65 666.93,1097.60 672.70,1097.60C678.47,1097.60 684.23,1095.70 690.00,1095.70C695.77,1095.70 701.53,1100.40 707.30,1100.40C713.07,1100.40 718.83,1098.50 724.60,1098.50C730.37,1098.50 736.13,1104.00 741.90,1104.40C747.67,1104.80 753.43,1104.80 759.20,1105.00C764.97,1105.20 770.73,1105.20 776.50,1105.60C782.27,1106.00 788.03,1108.70 793.80,1108.70C799.57,1108.70 805.33,1085.20 811.10,1084.60C816.87,1084.00 822.63,1083.70 828.40,1083.70C834.17,1083.70 839.93,1087.40 845.70,1087.40C851.47,1087.40 857.23,1080.13 863.00,1077.20C868.77,1074.27 874.53,1071.95 880.30,1069.80C886.07,1067.65 891.83,1064.97 897.60,1064.30C903.37,1063.63 909.13,1063.77 914.90,1063.30C920.67,1062.83 926.43,1062.70 932.20,1061.50C937.97,1060.30 943.73,1042.00 949.50,1042.00C955.27,1042.00 961.03,1049.73 966.80,1050.00C972.57,1050.27 978.33,1050.40 984.10,1050.40C989.87,1050.40 995.63,1049.47 1001.40,1047.60C1007.17,1045.73 1012.93,1013.00 1018.70,1013.00C1024.47,1013.00 1030.23,1027.80 1036.00,1027.80C1041.77,1027.80 1047.53,1026.58 1053.30,1025.40C1059.07,1024.22 1064.83,1022.10 1070.60,1020.70C1076.37,1019.30 1082.13,1019.30 1087.90,1017.00C1093.67,1014.70 1099.43,1008.17 1105.20,1006.90C1110.97,1005.63 1116.73,1005.53 1122.50,1005.00C1128.27,1004.47 1134.03,1004.57 1139.80,1003.70C1145.57,1002.83 1151.33,995.40 1157.10,994.80C1162.87,994.20 1168.63,993.90 1174.40,993.90C1180.17,993.90 1185.93,1002.20 1191.70,1002.20C1197.47,1002.20 1203.23,986.77 1209.00,983.70C1214.77,980.63 1220.53,979.10 1226.30,979.10C1232.07,979.10 1237.83,988.63 1243.60,991.10C1249.37,993.57 1255.13,994.80 1260.90,994.80C1266.67,994.80 1272.43,989.30 1278.20,989.30C1283.97,989.30 1289.73,990.20 1295.50,992.00C1301.27,993.80 1307.03,1005.60 1312.80,1005.60C1318.57,1005.60 1324.33,991.10 1330.10,991.10C1335.87,991.10 1341.63,991.40 1347.40,992.00C1353.17,992.60 1358.93,1007.80 1364.70,1007.80C1370.47,1007.80 1376.23,1007.03 1382.00,1005.50C1387.77,1003.97 1393.53,997.20 1399.30,997.20C1405.07,997.20 1410.83,1002.53 1416.60,1006.50C1422.37,1010.47 1428.13,1017.53 1433.90,1021.00C1439.67,1024.47 1445.43,1027.30 1451.20,1027.30C1456.97,1027.30 1462.73,1025.52 1468.50,1023.10C1474.27,1020.68 1480.03,1012.80 1485.80,1012.80C1491.57,1012.80 1497.33,1049.00 1503.10,1049.00C1508.87,1049.00 1514.63,1047.93 1520.40,1047.60C1526.17,1047.27 1531.93,1047.27 1537.70,1047.00C1543.47,1046.73 1549.23,1046.00 1555.00,1046.00C1560.77,1046.00 1566.53,1063.60 1572.30,1063.60C1578.07,1063.60 1583.83,1062.50 1589.60,1062.50C1595.37,1062.50 1601.13,1062.87 1606.90,1063.60C1612.67,1064.33 1618.43,1068.22 1624.20,1070.80C1629.97,1073.38 1635.73,1079.10 1641.50,1079.10C1647.27,1079.10 1653.03,1079.10 1658.80,1079.10C1664.57,1079.10 1670.33,1079.05 1676.10,1079.00" fill="none" stroke="#5a7a44" stroke-width="2.7"/><g stroke="#8a8a8a" stroke-width="1.6" fill="none"><path d="M656,888.3V1124.3H1650"/><path d="M650,1124.3H656"/><path d="M650,1063.6H656"/><path d="M650,1002.9H656"/><path d="M650,942.2H656"/><path d="M650,888.3H656"/><path d="M690.0,1124.3V1130.3"/><path d="M759.2,1124.3V1130.3"/><path d="M828.4,1124.3V1130.3"/><path d="M897.6,1124.3V1130.3"/><path d="M966.8,1124.3V1130.3"/><path d="M1036.0,1124.3V1130.3"/><path d="M1105.2,1124.3V1130.3"/><path d="M1174.4,1124.3V1130.3"/><path d="M1243.6,1124.3V1130.3"/><path d="M1312.8,1124.3V1130.3"/><path d="M1382.0,1124.3V1130.3"/><path d="M1451.2,1124.3V1130.3"/><path d="M1520.4,1124.3V1130.3"/><path d="M1589.6,1124.3V1130.3"/><path d="M1658.8,1124.3V1130.3"/></g></svg><div class="t" style="right:1005.0px;top:1115.9px;font-size:17px;line-height:17px;color:#707070;font-weight:400;letter-spacing:0px;">0</div><div class="t" style="right:1005.0px;top:1055.2px;font-size:17px;line-height:17px;color:#707070;font-weight:400;letter-spacing:0px;">0.9</div><div class="t" style="right:1005.0px;top:994.5px;font-size:17px;line-height:17px;color:#707070;font-weight:400;letter-spacing:0px;">1.8</div><div class="t" style="right:1005.0px;top:933.8px;font-size:17px;line-height:17px;color:#707070;font-weight:400;letter-spacing:0px;">2.7</div><div class="t" style="right:1005.0px;top:885.9px;font-size:17px;line-height:17px;color:#707070;font-weight:400;letter-spacing:0px;">3.5</div><div class="t" style="left:-310.0px;width:2000px;text-align:center;top:1131.9px;font-size:17.5px;line-height:17.5px;color:#6a6a6a;font-weight:400;letter-spacing:0px;">Jan 03</div><div class="t" style="left:-240.8px;width:2000px;text-align:center;top:1131.9px;font-size:17.5px;line-height:17.5px;color:#6a6a6a;font-weight:400;letter-spacing:0px;">Jan 03</div><div class="t" style="left:-171.6px;width:2000px;text-align:center;top:1131.9px;font-size:17.5px;line-height:17.5px;color:#6a6a6a;font-weight:400;letter-spacing:0px;">Jan 04</div><div class="t" style="left:-102.4px;width:2000px;text-align:center;top:1131.9px;font-size:17.5px;line-height:17.5px;color:#6a6a6a;font-weight:400;letter-spacing:0px;">Jan 04</div><div class="t" style="left:-33.2px;width:2000px;text-align:center;top:1131.9px;font-size:17.5px;line-height:17.5px;color:#6a6a6a;font-weight:400;letter-spacing:0px;">Jan 04</div><div class="t" style="left:36.0px;width:2000px;text-align:center;top:1131.9px;font-size:17.5px;line-height:17.5px;color:#6a6a6a;font-weight:400;letter-spacing:0px;">Jan 04</div><div class="t" style="left:105.2px;width:2000px;text-align:center;top:1131.9px;font-size:17.5px;line-height:17.5px;color:#6a6a6a;font-weight:400;letter-spacing:0px;">Jan 04</div><div class="t" style="left:174.4px;width:2000px;text-align:center;top:1131.9px;font-size:17.5px;line-height:17.5px;color:#6a6a6a;font-weight:400;letter-spacing:0px;">Jan 04</div><div class="t" style="left:243.6px;width:2000px;text-align:center;top:1131.9px;font-size:17.5px;line-height:17.5px;color:#6a6a6a;font-weight:400;letter-spacing:0px;">Jan 04</div><div class="t" style="left:312.8px;width:2000px;text-align:center;top:1131.9px;font-size:17.5px;line-height:17.5px;color:#6a6a6a;font-weight:400;letter-spacing:0px;">Jan 04</div><div class="t" style="left:382.0px;width:2000px;text-align:center;top:1131.9px;font-size:17.5px;line-height:17.5px;color:#6a6a6a;font-weight:400;letter-spacing:0px;">Jan 04</div><div class="t" style="left:451.2px;width:2000px;text-align:center;top:1131.9px;font-size:17.5px;line-height:17.5px;color:#6a6a6a;font-weight:400;letter-spacing:0px;">Jan 04</div><div class="t" style="left:520.4px;width:2000px;text-align:center;top:1131.9px;font-size:17.5px;line-height:17.5px;color:#6a6a6a;font-weight:400;letter-spacing:0px;">Jan 04</div><div class="t" style="left:589.6px;width:2000px;text-align:center;top:1131.9px;font-size:17.5px;line-height:17.5px;color:#6a6a6a;font-weight:400;letter-spacing:0px;">Jan 04</div><div class="t" style="left:658.8px;width:2000px;text-align:center;top:1131.9px;font-size:17.5px;line-height:17.5px;color:#6a6a6a;font-weight:400;letter-spacing:0px;">Jan 04</div><div class="t" style="left:-420.0px;width:2000px;text-align:center;top:959.2px;font-size:16.5px;line-height:16.5px;color:#777;font-weight:400;letter-spacing:0px;transform:rotate(-90deg);">VPD (kPa)</div><svg style="position:absolute;left:1309.3px;top:1173.3px" width="19" height="12" viewBox="0 0 19 12"><path d="M1,6H18" stroke="#5a7f92" stroke-width="2.2"/><circle cx="9.5" cy="6" r="3.6" fill="#fff" stroke="#5a7f92" stroke-width="2.2"/></svg><div class="t" style="left:1335.0px;top:1171.1px;font-size:17px;line-height:17px;color:#6a8b9b;font-weight:400;letter-spacing:0px;">VPD Campo</div><svg style="position:absolute;left:1442.0px;top:1173.3px" width="19" height="12" viewBox="0 0 19 12"><path d="M1,6H18" stroke="#5f7d44" stroke-width="2.2"/><circle cx="9.5" cy="6" r="3.6" fill="#fff" stroke="#5f7d44" stroke-width="2.2"/></svg><div class="t" style="left:1467.8px;top:1171.1px;font-size:17px;line-height:17px;color:#6e8a55;font-weight:400;letter-spacing:0px;">VPD Sotto</div></div></div></div></body></html>
